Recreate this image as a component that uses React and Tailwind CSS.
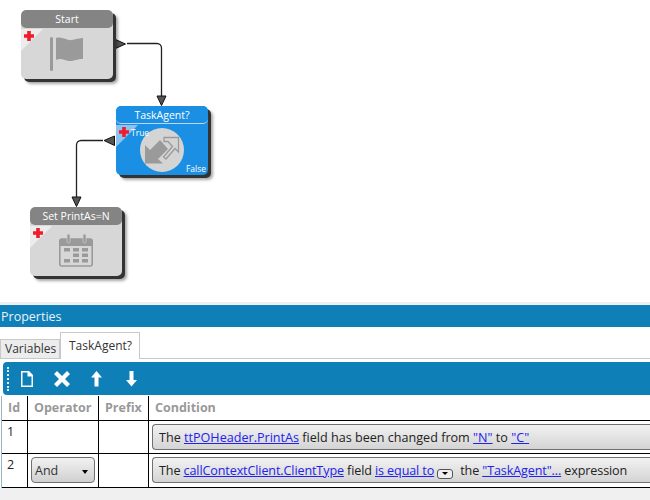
const FONT = { fontFamily: '"Open Sans", "Noto Sans", sans-serif' }

function Plus({ className }) {
  return (
    <svg className={className} width="10" height="10" viewBox="0 0 10 10">
      <path d="M3.2 0h3.6v3.2H10v3.6H6.8V10H3.2V6.8H0V3.2h3.2z" fill="#f01c2c" />
    </svg>
  )
}

function Node({ title, x, y, blue, children }) {
  return (
    <div
      className={`absolute h-[69px] w-[92px] overflow-hidden rounded-[5px] shadow-[3px_3px_0_#333,5px_5px_3px_rgba(0,0,0,0.35)] ${
        blue ? 'bg-[#1a8fe3]' : 'bg-[#d7d7d7]'
      }`}
      style={{ left: x, top: y }}
    >
      <div
        className={`flex h-[18px] items-center justify-center rounded-[5px] text-[10.5px] leading-none text-white ${
          blue ? 'border-b border-[#b9d9f2] bg-[#1a8fe3] pt-px' : 'bg-[#848484]'
        }`}
      >
        {title}
      </div>
      <svg className="absolute left-0 top-[19px]" width="22" height="22" viewBox="0 0 22 22">
        <path d="M0 0H22L0 22Z" fill={blue ? '#8cc4ef' : '#ececec'} />
      </svg>
      <Plus className="absolute left-[3px] top-[21px]" />
      {children}
    </div>
  )
}

function Arrowhead({ d }) {
  return <path d={d} fill="#555" stroke="#111" strokeWidth="1" />
}

function Connectors() {
  return (
    <svg className="absolute left-0 top-0" width="650" height="302" viewBox="0 0 650 302">
      <path d="M127 43.5H157a4.5 4.5 0 0 1 4.5 4.5V96" fill="none" stroke="#222" strokeWidth="1.3" />
      <Arrowhead d="M115.5 39.5L125.5 44L115.5 48.5Z" />
      <Arrowhead d="M157 96H166L161.5 105.5Z" />
      <path d="M103 140.5H81a4.5 4.5 0 0 0 -4.5 4.5V197" fill="none" stroke="#222" strokeWidth="1.3" />
      <Arrowhead d="M114.5 136V145.5L104 140.5Z" />
      <Arrowhead d="M72 197H81L76.5 206.5Z" />
    </svg>
  )
}

function Cell({ className = '', children }) {
  return <div className={`border-b border-r border-black ${className}`}>{children}</div>
}

function Link({ children }) {
  return <span className="text-[#2222ee] underline">{children}</span>
}

function ConditionBox({ className = '', children }) {
  return (
    <div className={`flex h-[26px] items-center whitespace-nowrap rounded-l-[4px] border border-r-0 border-[#707070] bg-gradient-to-b from-[#f2f2f2] to-[#d4d4d4] pl-[6px] pt-[3px] text-[12.6px] text-[#222] ${className}`}>
      {children}
    </div>
  )
}

function ToolbarIcon({ d, className, width = 16 }) {
  return (
    <svg className={className} width={width} height="16" viewBox={`0 0 ${width} 16`}>
      <path d={d} fill="#fff" fillRule="evenodd" />
    </svg>
  )
}

export default function App() {
  return (
    <div className="flex h-[500px] w-[650px] flex-col overflow-hidden bg-white" style={FONT}>
      <div className="relative h-[302px] shrink-0 bg-white">
        <Connectors />
        <Node title="Start" x={21} y={10}>
          <svg className="absolute left-[29px] top-[27px]" width="34" height="36" viewBox="0 0 34 36">
            <rect x="0" y="0" width="3" height="34" rx="1.5" fill="#9a9a9a" />
            <path d="M6 1C12 -1 17 4 22 3C25 2.500 27 1.500 33 1V22C27 22 24 24 20 24C15 24 11 20 6 23Z" fill="#9a9a9a" />
          </svg>
        </Node>
        <Node title="TaskAgent?" x={116} y={106} blue>
          <svg className="absolute left-[24px] top-[22px]" width="44" height="44" viewBox="0 0 44 44">
            <circle cx="22" cy="22" r="22" fill="#d4d4d4" />
            <path d="M24 9.500H38.500V24L35 20.500L26 31L23.500 29L32.500 18.500L28 13.500H24Z" fill="none" stroke="#9a9a9a" strokeWidth="1.300" />
            <path d="M5 35.500V17L10 22L20 12L28 21L18 31L23 35.500Z" fill="#9a9a9a" />
          </svg>
          <span className="absolute left-[15px] top-[23px] text-[8.5px] leading-none text-white">True</span>
          <span className="absolute bottom-[2px] right-[2px] text-[8.5px] leading-none text-white">False</span>
        </Node>
        <Node title="Set PrintAs=N" x={30} y={207}>
          <svg className="absolute left-[29px] top-[27px]" width="34" height="33" viewBox="0 0 34 33">
            <rect x="0.800" y="5" width="32.400" height="27" rx="2" fill="none" stroke="#9a9a9a" strokeWidth="1.600" />
            <rect x="1" y="5" width="32" height="7" fill="#9a9a9a" />
            <rect x="8" y="0" width="3" height="9" rx="1.500" fill="#9a9a9a" stroke="#d7d7d7" strokeWidth="0.600" />
            <rect x="24" y="0" width="3" height="9" rx="1.500" fill="#9a9a9a" stroke="#d7d7d7" strokeWidth="0.600" />
            <path d="M5 14h6v3.500H5zM14 14h6v3.500h-6zM23 14h6v3.500h-6zM14 19.500h6V23h-6zM23 19.500h6V23h-6zM5 25h6v3.500H5zM14 25h6v3.500h-6zM23 25h6v3.500h-6z" fill="#9a9a9a" />
          </svg>
        </Node>
      </div>

      <div className="h-[3px] shrink-0 bg-[#f0f0f0]" />
      <div className="flex h-[22px] shrink-0 items-center bg-[#0f7fb8] pl-px pt-[3px] text-[12.5px] text-[#e8f2f8]">Properties</div>

      <div className="flex h-[32px] shrink-0 items-end border-b border-[#c8c8c8] pt-[6px]">
        <div className="flex h-[19px] w-[60px] items-center border border-b-0 border-[#c8c8c8] bg-[#ececec] pl-[4px] text-[12px] text-[#333]">Variables</div>
        <div className="z-10 -mb-px flex h-[27px] w-[80px] items-center border border-b-0 border-[#c8c8c8] bg-white pl-[8px] text-[12px] text-[#333]">TaskAgent?</div>
      </div>

      <div className="mb-px ml-[3px] mt-[3px] flex h-[33px] shrink-0 items-center rounded-l-[4px] bg-[#0f7fb8] text-white">
        <div className="ml-[4px] h-[24px] w-[2px] border-l-2 border-dotted border-[#e8e8e8]" />
        <ToolbarIcon className="ml-[12px]" width={12} d="M0 0H8L12 4V16H0ZM1.500 1.500V14.500H10.500V5.500H6.500V1.500Z" />
        <ToolbarIcon className="ml-[21px]" d="M3 0L8 5L13 0L16 3L11 8L16 13L13 16L8 11L3 16L0 13L5 8L0 3Z" />
        <ToolbarIcon className="ml-[21px]" width={11} d="M5.500 0L11 6.500H7.500V15.500H3.500V6.500H0Z" />
        <ToolbarIcon className="ml-[24px]" width={11} d="M5.500 15.500L11 9H7.500V0H3.500V9H0Z" />
      </div>

      <div className="ml-px grid grid-cols-[26px_71px_50px_1fr] grid-rows-[25px_33px_34px] border-l border-[#9db4c4] text-[12.5px]">
        <Cell className="flex items-center pl-[6px] pt-px font-bold text-[#999]">Id</Cell>
        <Cell className="flex items-center pl-[6px] pt-px font-bold text-[#999]">Operator</Cell>
        <Cell className="flex items-center pl-[6px] pt-px font-bold text-[#999]">Prefix</Cell>
        <Cell className="flex items-center border-r-0 pl-[6px] pt-px font-bold text-[#999]">Condition</Cell>

        <Cell className="pl-[5px] pt-[2px] text-[#222]">1</Cell>
        <Cell />
        <Cell />
        <Cell className="border-r-0 pl-[3px] pt-[3px]">
          <ConditionBox>
            The&nbsp;<Link>ttPOHeader.PrintAs</Link>&nbsp;field has been changed from&nbsp;<Link>"N"</Link>&nbsp;to&nbsp;<Link>"C"</Link>
          </ConditionBox>
        </Cell>

        <Cell className="pl-[5px] pt-[2px] text-[#222]">2</Cell>
        <Cell className="pl-[3px] pt-[3px]">
          <div className="flex h-[26px] w-[64px] items-center justify-between rounded-[4px] border border-[#707070] bg-gradient-to-b from-[#f2f2f2] to-[#d0d0d0] px-[3px] pr-[6px] pt-[3px] text-[#333]">
            And
            <span className="h-0 w-0 border-x-[3.500px] border-t-[4px] border-x-transparent border-t-black" />
          </div>
        </Cell>
        <Cell />
        <Cell className="border-r-0 pl-[3px] pt-[3px]">
          <ConditionBox className="tracking-[-0.12px]">
            The&nbsp;<Link>callContextClient.ClientType</Link>&nbsp;field&nbsp;<Link>is equal to</Link>
            <span className="ml-[3px] mr-[7px] mt-[4px] flex h-[10px] w-[16px] items-center justify-center rounded-[3px] border border-[#555] bg-[#eee]">
              <span className="h-0 w-0 border-x-[3px] border-t-[3px] border-x-transparent border-t-black" />
            </span>
            the&nbsp;<Link>"TaskAgent"...</Link>&nbsp;expression
          </ConditionBox>
        </Cell>
      </div>

      <div className="flex-1 bg-[#f0f0f0]" />
    </div>
  )
}
